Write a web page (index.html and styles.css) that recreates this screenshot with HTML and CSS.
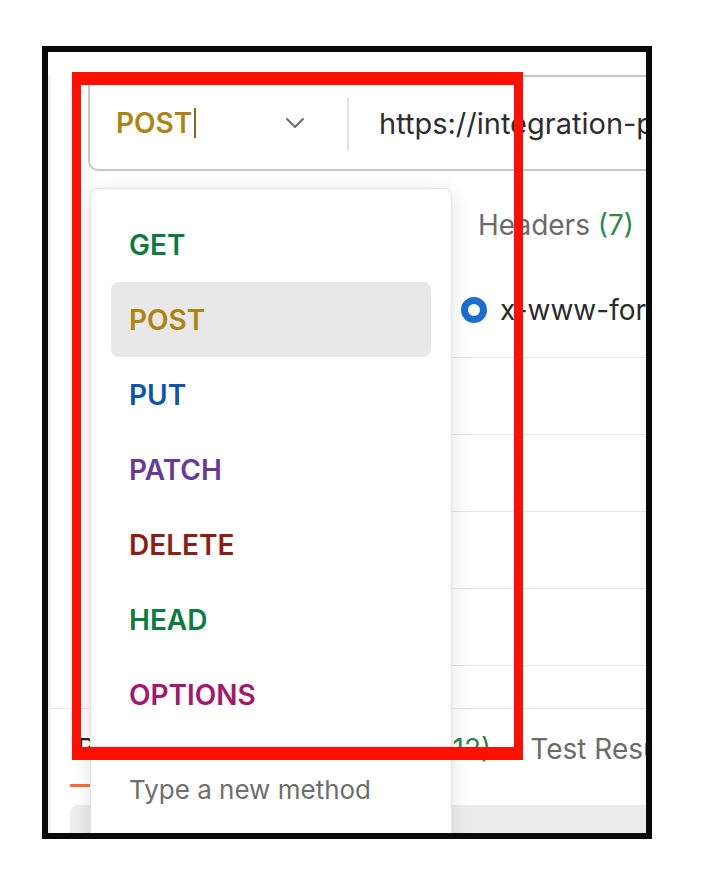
FILE: index.html
```html
<!DOCTYPE html>
<html lang="en">

<head>
    <meta charset="utf-8">
    <meta name="viewport" content="width=device-width, initial-scale=1.0">
    <title>Request method menu</title>
    <link rel="stylesheet" href="styles.css">
</head>

<body>
    <div class="frame">
        <div class="app">
            <div class="url-bar">
                <div class="method-select">
                    <span class="method-value">POST</span><span class="caret"></span>
                    <svg class="chevron" width="20" height="12" viewBox="0 0 20 12">
                        <polyline points="2,2 10,10 18,2" fill="none" stroke="#6b6b6b" stroke-width="2" stroke-linecap="round" stroke-linejoin="round" />
                    </svg>
                </div>
                <span class="divider"></span>
                <div class="url-input">https://integration-platform.example.com/oauth/token</div>
            </div>

            <nav class="req-tabs">
                <span class="tab">Headers <span class="count">(7)</span></span>
                <span class="tab">Body</span>
            </nav>

            <div class="body-types">
                <span class="radio"></span>
                <span>x-www-form-urlencoded</span>
            </div>

            <div class="kv-table">
                <div class="kv-row"></div>
                <div class="kv-row"></div>
                <div class="kv-row"></div>
                <div class="kv-row"></div>
                <div class="kv-row"></div>
            </div>

            <section class="response">
                <nav class="res-tabs">
                    <span class="tab active">Body</span>
                    <span class="tab">Cookies</span>
                    <span class="tab">Headers <span class="count">(12)</span></span>
                    <span class="tab">Test Results</span>
                </nav>
                <div class="res-body">{ "access_token": "eyJhbGciOi..." }</div>
            </section>
        </div>

        <div class="method-menu">
            <ul class="method-list">
                <li class="method get">GET</li>
                <li class="method post valgt">POST</li>
                <li class="method put">PUT</li>
                <li class="method patch">PATCH</li>
                <li class="method delete">DELETE</li>
                <li class="method head">HEAD</li>
                <li class="method options">OPTIONS</li>
            </ul>
            <div class="new-method">Type a new method</div>
        </div>

        <div class="markering"></div>
    </div>
</body>

</html>
```

FILE: styles.css
```css
* {
    box-sizing: border-box;
}

body {
    margin: 0;
    background-color: #fff;
    font-family: 'Inter', 'Noto Sans', sans-serif;
    font-size: 28px;
}

.frame {
    position: relative;
    margin: 46px 0 0 42px;
    width: 610px;
    height: 793px;
    border: 6px solid #0a0a0a;
    overflow: hidden;
    background-color: #fff;
}

.app {
    height: 100%;
    border-left: 3px solid #f0f0f0;
}

/* url bar */

.url-bar {
    display: flex;
    align-items: center;
    margin: 23px -30px 0 37px;
    height: 96px;
    border: 2px solid #c6c6c6;
    border-right: none;
    border-radius: 10px 0 0 10px;
}

.method-select {
    flex: none;
    display: flex;
    align-items: center;
    width: 257px;
    padding-left: 26px;
    padding-right: 42px;
}

.method-value {
    color: #ad8412;
    font-weight: 600;
}

.caret {
    width: 2px;
    height: 30px;
    margin-left: 2px;
    background-color: #8a6a10;
}

.chevron {
    margin-left: auto;
}

.divider {
    flex: none;
    width: 2px;
    height: 53px;
    background-color: #e3e3e3;
}

.url-input {
    padding-left: 30px;
    color: #2d2d2d;
    font-size: 29px;
    white-space: nowrap;
}

/* request tabs */

.req-tabs,
.res-tabs {
    display: flex;
    white-space: nowrap;
    color: #6b6b6b;
}

.req-tabs {
    margin-top: 24px;
    padding-left: 427px;
    height: 60px;
    align-items: center;
    gap: 40px;
}

.count {
    color: #2a8a4c;
}

.body-types {
    display: flex;
    align-items: center;
    gap: 13px;
    height: 102px;
    padding: 8px 0 0 410px;
    color: #2b2b2b;
    white-space: nowrap;
}

.radio {
    flex: none;
    width: 26px;
    height: 26px;
    border: 7px solid #1b6fd3;
    border-radius: 50%;
}

.kv-table {
    height: 351px;
    margin-left: 60px;
    overflow: hidden;
}

.kv-row {
    height: 77px;
    border-top: 1px solid #e6e6e6;
}

/* response */

.response {
    border-top: 1px solid #e6e6e6;
}

.res-tabs {
    gap: 25px;
    padding-left: 19px;
}

.res-tabs .tab {
    height: 78px;
    padding: 4px 7px 0;
    display: flex;
    align-items: center;
    border-bottom: 3px solid transparent;
}

.res-tabs .active {
    border-bottom-color: #ff6c37;
    color: #212121;
}

.res-body {
    margin: 18px 0 0 19px;
    height: 120px;
    padding: 26px 0 0 30px;
    background-color: #ededed;
    border-radius: 8px 0 0 0;
    color: #333;
    white-space: nowrap;
}

/* method dropdown */

.method-menu {
    position: absolute;
    left: 42px;
    top: 136px;
    width: 362px;
    height: 700px;
    background-color: #fff;
    border: 1px solid #e3e3e3;
    border-radius: 8px;
    box-shadow: 0 4px 20px rgba(0, 0, 0, .12);
    z-index: 2;
}

.method-list {
    list-style: none;
    margin: 0;
    padding: 18px 20px 0;
}

.method {
    display: flex;
    align-items: center;
    height: 75px;
    padding-left: 18px;
    border-radius: 8px;
    font-weight: 600;
}

.method.valgt {
    background-color: #e8e8e8;
}

.get,
.head {
    color: #0b7c3c;
}

.post {
    color: #ad8412;
}

.put {
    color: #0a55b4;
}

.patch {
    color: #673a98;
}

.delete {
    color: #8f1d14;
}

.options {
    color: #a3186a;
}

.new-method {
    display: flex;
    align-items: center;
    height: 86px;
    margin-top: 14px;
    padding-left: 38px;
    border-top: 1px solid #e6e6e6;
    color: #6e6e6e;
    font-size: 26px;
}

/* red annotation box */

.markering {
    position: absolute;
    left: 24px;
    top: 20px;
    width: 451px;
    height: 688px;
    border-style: solid;
    border-color: #fe1000;
    border-width: 13px 9px;
    z-index: 5;
}
```
